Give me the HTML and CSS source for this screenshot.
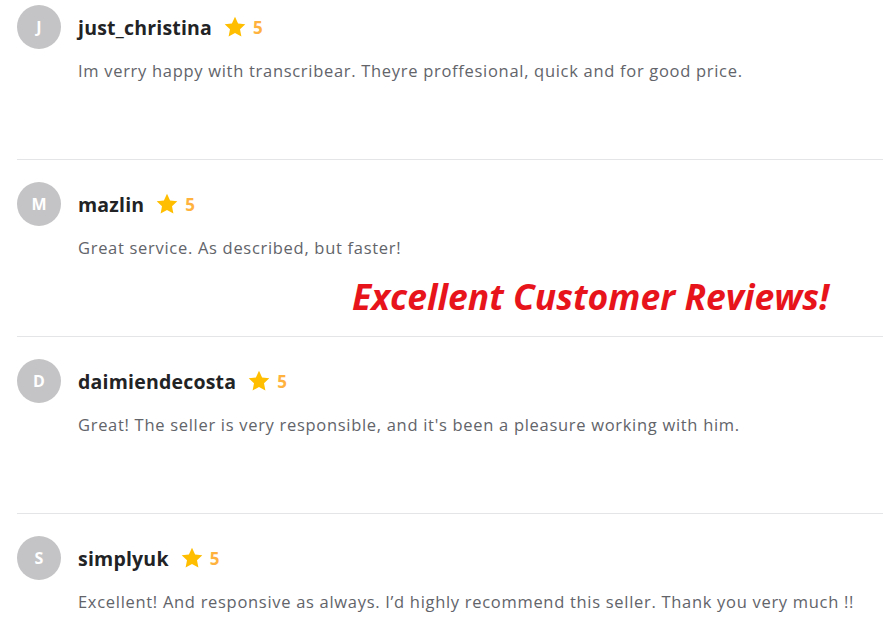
FILE: index.html
```html
<!DOCTYPE html>
<html lang="en">
<head>
    <meta charset="UTF-8">
    <meta name="viewport" content="width=device-width, initial-scale=1.0">
    <title>Reviews</title>
    <link rel="stylesheet" href="styles.css">
</head>
<body>
    <div class="reviews">
        <div class="review">
            <div class="review__header">
                <span class="avatar">J</span>
                <span class="review__name">just_christina</span>
                <span class="rating">
                    <svg class="star" viewBox="0 0 24 24"><path d="M12 1.8l3.1 6.6 7.2.9-5.3 5 1.4 7.1L12 17.9l-6.4 3.5 1.4-7.1-5.3-5 7.2-.9z"/></svg>
                    <span class="rating__value">5</span>
                </span>
            </div>
            <p class="review__text">Im verry happy with transcribear. Theyre proffesional, quick and for good price.</p>
        </div>
        <div class="review review--tagged">
            <div class="review__header">
                <span class="avatar">M</span>
                <span class="review__name">mazlin</span>
                <span class="rating">
                    <svg class="star" viewBox="0 0 24 24"><path d="M12 1.8l3.1 6.6 7.2.9-5.3 5 1.4 7.1L12 17.9l-6.4 3.5 1.4-7.1-5.3-5 7.2-.9z"/></svg>
                    <span class="rating__value">5</span>
                </span>
            </div>
            <p class="review__text">Great service. As described, but faster!</p>
            <div class="tagline">Excellent Customer Reviews!</div>
        </div>
        <div class="review">
            <div class="review__header">
                <span class="avatar">D</span>
                <span class="review__name">daimiendecosta</span>
                <span class="rating">
                    <svg class="star" viewBox="0 0 24 24"><path d="M12 1.8l3.1 6.6 7.2.9-5.3 5 1.4 7.1L12 17.9l-6.4 3.5 1.4-7.1-5.3-5 7.2-.9z"/></svg>
                    <span class="rating__value">5</span>
                </span>
            </div>
            <p class="review__text">Great! The seller is very responsible, and it's been a pleasure working with him.</p>
        </div>
        <div class="review">
            <div class="review__header">
                <span class="avatar">S</span>
                <span class="review__name">simplyuk</span>
                <span class="rating">
                    <svg class="star" viewBox="0 0 24 24"><path d="M12 1.8l3.1 6.6 7.2.9-5.3 5 1.4 7.1L12 17.9l-6.4 3.5 1.4-7.1-5.3-5 7.2-.9z"/></svg>
                    <span class="rating__value">5</span>
                </span>
            </div>
            <p class="review__text">Excellent! And responsive as always. I’d highly recommend this seller. Thank you very much !!</p>
        </div>
    </div>
</body>
</html>
```

FILE: styles.css
```css
* {
    box-sizing: border-box;
}
body {
    margin: 0;
    padding: 0;
    background: #ffffff;
    font-family: "Open Sans", "Liberation Sans", sans-serif;
    overflow: hidden;
}
.reviews {
    margin-top: -18px;
    padding-left: 17px;
}
.review {
    position: relative;
    padding: 22px 0 76px;
    border-top: 1px solid #e4e5e7;
}
.review__header {
    display: flex;
    align-items: center;
    height: 44px;
}
.avatar {
    width: 44px;
    height: 44px;
    border-radius: 50%;
    background: #c4c4c6;
    color: #ffffff;
    font-weight: 700;
    font-size: 16px;
    display: flex;
    align-items: center;
    justify-content: center;
    margin-right: 17px;
}
.review__name {
    font-size: 19.5px;
    font-weight: 700;
    letter-spacing: 0.2px;
    color: #222325;
    margin-right: 11px;
}
.rating {
    display: flex;
    align-items: center;
    gap: 6px;
}
.star {
    width: 24px;
    height: 24px;
    fill: #ffbe00;
}
.rating__value {
    font-size: 17px;
    font-weight: 700;
    color: #ffb33e;
}
.review__text {
    margin: 10px 0 0 61px;
    font-size: 16.5px;
    letter-spacing: 0.7px;
    line-height: 24px;
    color: #62646a;
}
.tagline {
    position: absolute;
    left: 335px;
    top: 112px;
    font-style: italic;
    font-weight: 700;
    font-size: 35.5px;
    color: #e8141c;
}
```
